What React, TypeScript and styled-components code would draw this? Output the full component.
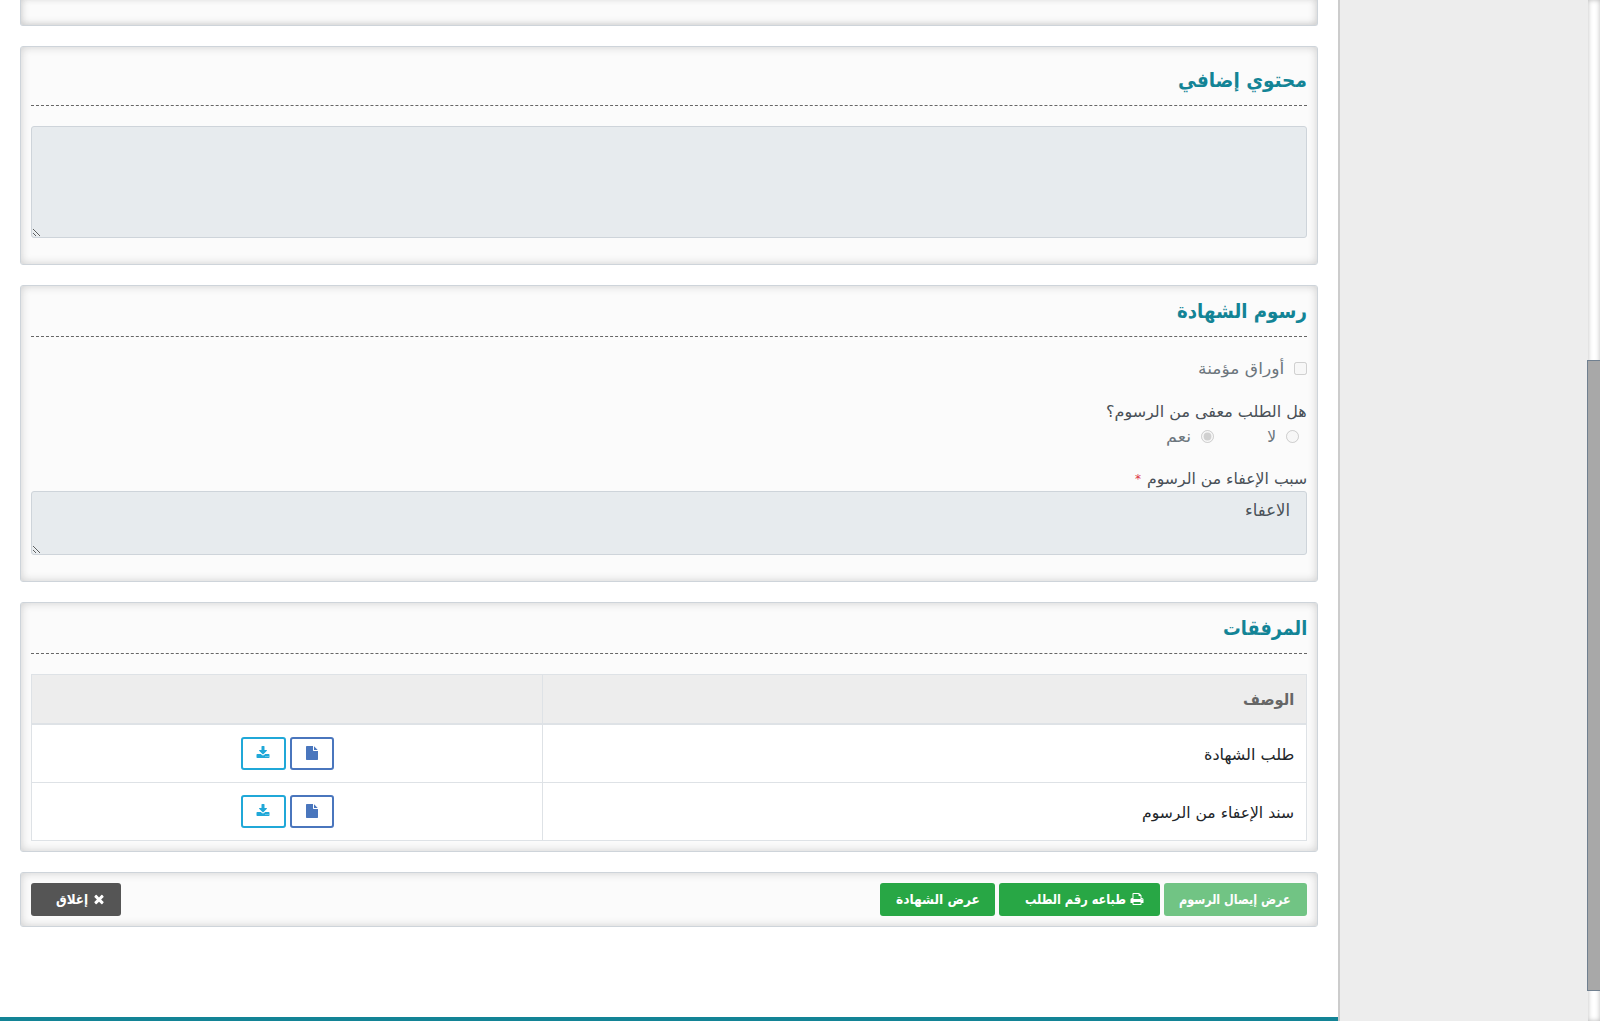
import React, { useLayoutEffect, useRef, useState } from "react";
import styled, { createGlobalStyle } from "styled-components";

const Global = createGlobalStyle`
  *, *::before, *::after { box-sizing: border-box; }
  html, body { margin: 0; height: 100%; overflow: hidden; background: #fff; }
  body { font-family: "DejaVu Sans", "Noto Sans", sans-serif; font-size: 15px; color: #212529; }
`;

const Page = styled.div`
  direction: rtl;
  display: flex;
  width: 1600px;
  height: 1021px;
  overflow: hidden;
`;

const ScrollTrack = styled.div`
  display: flex;
  flex: none;
  width: 12px;
  padding-top: 360px;
  background: #fff;
  box-shadow: inset 0 0 5px #bbb;
`;

const ScrollThumb = styled.div`
  flex: none;
  width: 13px;
  height: 631px;
  background: #a8a8a8;
  border: 1px solid #708090;
  border-right: 0;
  z-index: 1;
`;

const Sidebar = styled.aside`
  flex: none;
  width: 250px;
  background: #ededed;
  border-left: 2px solid #ccc;
`;

const Main = styled.main`
  flex: 1;
  min-width: 0;
  display: flex;
  flex-direction: column;
  background: #fff;
`;

const Content = styled.div`
  flex: 1;
  display: flex;
  flex-direction: column;
  gap: 20px;
  padding: 0 20px;
`;

const FooterBar = styled.footer`
  flex: none;
  height: 4px;
  background: #138496;
`;

const Card = styled.section<{ $h: number; $cut?: boolean; $top?: number }>`
  flex: none;
  height: ${(p) => p.$h}px;
  padding: ${(p) => 10 + (p.$top ?? 0)}px 10px 10px;
  background: #fbfbfb;
  border: 1px solid #ced4da;
  border-top-width: ${(p) => (p.$cut ? 0 : 1)}px;
  border-radius: ${(p) => (p.$cut ? "0 0 3px 3px" : "3px")};
  box-shadow: ${(p) => (p.$cut ? "inset 0 -4px 8px -4px #ccc, inset 4px 0 8px -4px #ccc, inset -4px 0 8px -4px #ccc" : "inset 0 0 8px #ccc")};
`;

const Heading = styled.h2`
  margin: 0 0 20px;
  height: 41px;
  border-bottom: 1px dashed #666;
  font-size: 20px;
  line-height: 30px;
  font-weight: 700;
  color: #138496;
`;

const Area = styled.textarea<{ $h: number }>`
  display: block;
  width: 100%;
  height: ${(p) => p.$h}px;
  margin: 0;
  padding: 5px 16px;
  resize: vertical;
  background: #e7ebee;
  border: 1px solid #ced4da;
  border-radius: 3px;
  font-family: inherit;
  font-size: 16.5px;
  line-height: 28px;
  color: #495057;
`;

const Line = styled.div<{ $h: number; $mt?: number; $inset?: number; $muted?: boolean }>`
  display: flex;
  align-items: center;
  height: ${(p) => p.$h}px;
  margin-top: ${(p) => p.$mt ?? 0}px;
  padding-right: ${(p) => p.$inset ?? 0}px;
  line-height: ${(p) => p.$h}px;
  font-size: 15.5px;
  color: ${(p) => (p.$muted ? "#6c757d" : "#495057")};
`;

const Choice = styled.label<{ $w: number }>`
  display: flex;
  align-items: center;
  flex: none;
  gap: 10px;
  width: ${(p) => p.$w}px;
`;

const Tick = styled.input<{ $lift?: number }>`
  width: 13px;
  height: 13px;
  margin: 0 0 ${(p) => p.$lift ?? 0}px;
  flex: none;
`;

const Required = styled.span`
  margin-right: 6px;
  color: #dc3545;
  font-size: 12px;
`;

const Table = styled.div`
  border: 1px solid #dee2e6;
  background: #fff;
`;

const Row = styled.div<{ $head?: boolean }>`
  display: grid;
  grid-template-columns: 763px 1fr;
  height: ${(p) => (p.$head ? 50 : 58)}px;
  background: ${(p) => (p.$head ? "#ededed" : "#fff")};
  border-bottom: ${(p) => (p.$head ? 2 : 1)}px solid #dee2e6;
  font-size: 15.5px;
  font-weight: ${(p) => (p.$head ? 700 : 400)};
  color: ${(p) => (p.$head ? "#666" : "#212529")};
  &:last-child { border-bottom: 0; height: 57px; }
`;

const Cell = styled.div<{ $drop: number }>`
  display: flex;
  align-items: center;
  padding: ${(p) => p.$drop}px 12px 0;
`;

const ActionCell = styled.div`
  display: flex;
  align-items: center;
  justify-content: center;
  gap: 4px;
  border-right: 1px solid #dee2e6;
`;

const OutlineButton = styled.button<{ $color: string; $w: number }>`
  display: flex;
  align-items: center;
  justify-content: center;
  width: ${(p) => p.$w}px;
  height: 33px;
  padding: 0 0 2px;
  background: #fff;
  border: 2px solid ${(p) => p.$color};
  border-radius: 3px;
  color: ${(p) => p.$color};
`;

const Actions = styled.div`
  display: flex;
  gap: 4px;
`;

const SolidButton = styled.button<{ $w: number; $pad: number; $bg?: string; $faded?: boolean; $end?: boolean }>`
  display: flex;
  align-items: center;
  gap: 4px;
  flex: none;
  width: ${(p) => p.$w}px;
  height: 33px;
  margin: 0 ${(p) => (p.$end ? "auto" : "0")} 0 0;
  padding: 0 ${(p) => p.$pad}px 1px 0;
  border: 0;
  border-radius: 3px;
  background: ${(p) => p.$bg ?? "#28a745"};
  opacity: ${(p) => (p.$faded ? 0.65 : 1)};
  color: #fff;
  font-family: inherit;
  font-size: 13.5px;
  font-weight: 700;
  line-height: 31px;
`;

const FitBox = styled.span<{ $w: number }>`
  display: block;
  flex: none;
  width: ${(p) => p.$w}px;
  white-space: nowrap;
`;

const FitInner = styled.span`
  display: inline-block;
  transform-origin: right center;
`;

/* Condenses or widens one line of text so that it fills the given measure. */
function Fit({ w, children }: { w: number; children: string }) {
  const ref = useRef<HTMLSpanElement>(null);
  const [scale, setScale] = useState(1);
  useLayoutEffect(() => {
    if (ref.current) setScale(w / ref.current.offsetWidth);
  }, [w, children]);
  return (
    <FitBox $w={w}>
      <FitInner ref={ref} style={{ transform: `scaleX(${scale})` }}>{children}</FitInner>
    </FitBox>
  );
}

const Glyph = styled.svg`
  display: block;
  flex: none;
  width: 14px;
  height: 14px;
  fill: currentColor;
`;

const paths = {
  file: "M1152 512v-472q22 14 36 28l408 408q14 14 28 36h-472zm-128 32q0 40 28 68t68 28h544v1056q0 40-28 68t-68 28h-1344q-40 0-68-28t-28-68v-1600q0-40 28-68t68-28h800v544z",
  download: "M1344 1344q0-26-19-45t-45-19-45 19-19 45 19 45 45 19 45-19 19-45zm256 0q0-26-19-45t-45-19-45 19-19 45 19 45 45 19 45-19 19-45zm128-224v320q0 40-28 68t-68 28h-1472q-40 0-68-28t-28-68v-320q0-40 28-68t68-28h465l135 136q58 56 136 56t136-56l136-136h464q40 0 68 28t28 68zm-325-569q17 41-14 70l-448 448q-18 19-45 19t-45-19l-448-448q-31-29-14-70 17-39 59-39h256v-448q0-26 19-45t45-19h256q26 0 45 19t19 45v448h256q42 0 59 39z",
  print: "M448 1536h896v-256h-896v256zm0-640h896v-384h-160q-40 0-68-28t-28-68v-160h-640v640zm1152 64q0-26-19-45t-45-19-45 19-19 45 19 45 45 19 45-19 19-45zm128 0v416q0 13-9.5 22.5t-22.5 9.5h-224v160q0 40-28 68t-68 28h-960q-40 0-68-28t-28-68v-160h-224q-13 0-22.5-9.5t-9.5-22.5v-416q0-79 56.5-135.5t135.5-56.5h64v-544q0-40 28-68t68-28h672q40 0 88 20t76 48l152 152q28 28 48 76t20 88v256h64q79 0 135.5 56.5t56.5 135.5z",
  times: "M1490 1322q0 40-28 68l-136 136q-28 28-68 28t-68-28l-294-294-294 294q-28 28-68 28t-68-28l-136-136q-28-28-28-68t28-68l294-294-294-294q-28-28-28-68t28-68l136-136q28-28 68-28t68 28l294 294 294-294q28-28 68-28t68 28l136 136q28 28 28 68t-28 68l-294 294 294 294q28 28 28 68z",
};

function Icon({ name }: { name: keyof typeof paths }) {
  return (
    <Glyph viewBox="0 0 1792 1792" aria-hidden="true">
      <path d={paths[name]} />
    </Glyph>
  );
}

const attachments = [
  { label: "طلب الشهادة", w: 90 },
  { label: "سند الإعفاء من الرسوم", w: 152 },
];

export default function App() {
  return (
    <Page>
      <Global />
      <ScrollTrack>
        <ScrollThumb />
      </ScrollTrack>
      <Sidebar />
      <Main>
        <Content>
          <Card $h={26} $cut />
          <Card $h={219} $top={8}>
            <Heading><Fit w={129}>محتوي إضافي</Fit></Heading>
            <Area $h={112} disabled />
          </Card>
          <Card $h={297}>
            <Heading><Fit w={130}>رسوم الشهادة</Fit></Heading>
            <Line $h={25} $muted>
              <Choice $w={120}>
                <Tick type="checkbox" $lift={2} disabled />
                <Fit w={86}>أوراق مؤمنة</Fit>
              </Choice>
            </Line>
            <Line $h={24} $mt={18}><Fit w={201}>هل الطلب معفى من الرسوم؟</Fit></Line>
            <Line $h={26} $inset={8} $muted>
              <Choice $w={85}>
                <Tick type="radio" name="exempt" $lift={2} disabled />
                <Fit w={9}>لا</Fit>
              </Choice>
              <Choice $w={60}>
                <Tick type="radio" name="exempt" $lift={2} disabled defaultChecked />
                <Fit w={25}>نعم</Fit>
              </Choice>
            </Line>
            <Line $h={24} $mt={17}>
              <Fit w={160}>سبب الإعفاء من الرسوم</Fit>
              <Required>*</Required>
            </Line>
            <Area $h={64} disabled defaultValue="الاعفاء" />
          </Card>
          <Card $h={250}>
            <Heading><Fit w={84}>المرفقات</Fit></Heading>
            <Table>
              <Row $head>
                <Cell $drop={1}><Fit w={51}>الوصف</Fit></Cell>
                <ActionCell />
              </Row>
              {attachments.map((a) => (
                <Row key={a.label}>
                  <Cell $drop={2}><Fit w={a.w}>{a.label}</Fit></Cell>
                  <ActionCell>
                    <OutlineButton $color="#4a76bd" $w={44}><Icon name="file" /></OutlineButton>
                    <OutlineButton $color="#20a8d8" $w={45}><Icon name="download" /></OutlineButton>
                  </ActionCell>
                </Row>
              ))}
            </Table>
          </Card>
          <Card $h={55}>
            <Actions>
              <SolidButton $w={143} $pad={16} $faded disabled><Fit w={112}>عرض إيصال الرسوم</Fit></SolidButton>
              <SolidButton $w={161} $pad={16}>
                <Icon name="print" />
                <Fit w={101}>طباعه رقم الطلب</Fit>
              </SolidButton>
              <SolidButton $w={115} $pad={15}><Fit w={84}>عرض الشهادة</Fit></SolidButton>
              <SolidButton $w={90} $pad={15} $bg="#555" $end>
                <Icon name="times" />
                <Fit w={32}>إغلاق</Fit>
              </SolidButton>
            </Actions>
          </Card>
        </Content>
        <FooterBar />
      </Main>
    </Page>
  );
}
